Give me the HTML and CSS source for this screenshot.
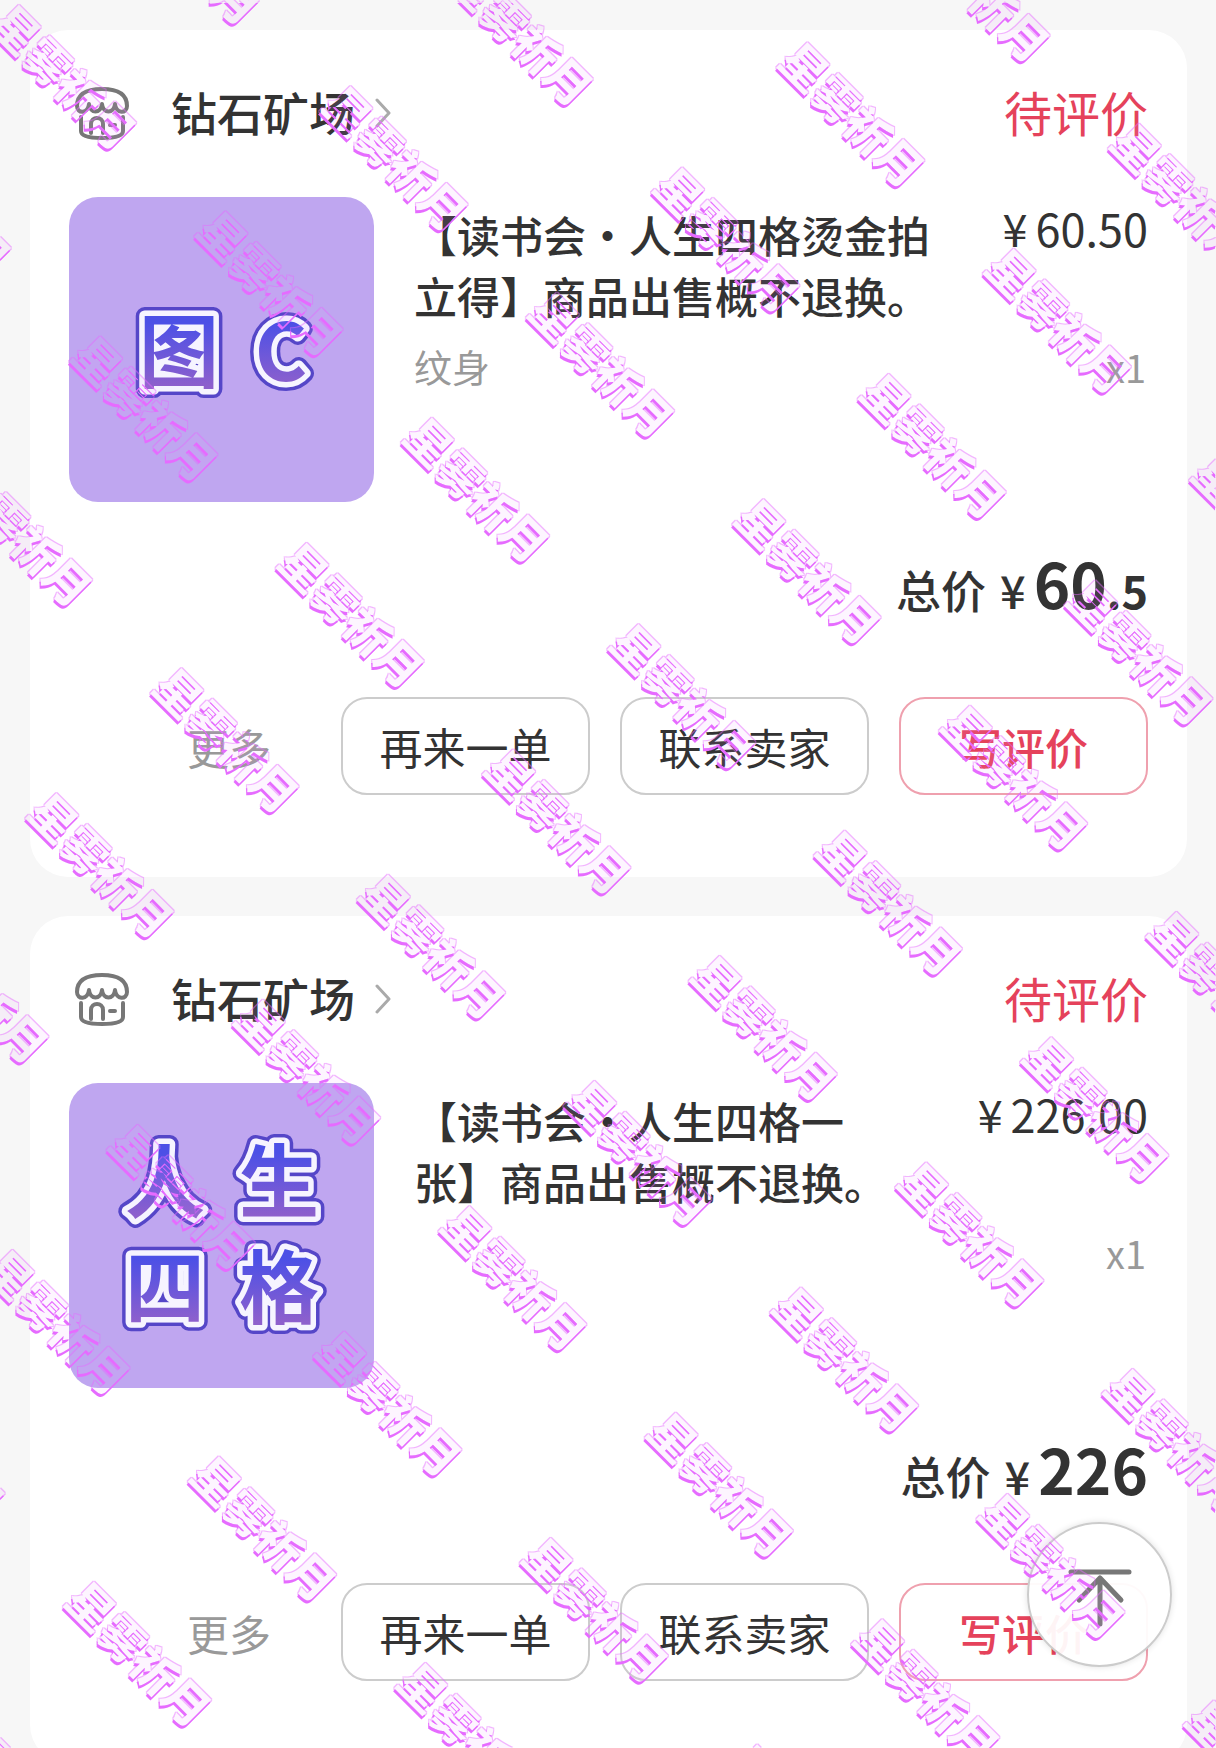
FILE: index.html
```html
<!DOCTYPE html>
<html lang="zh-CN">
<head>
    <meta charset="utf-8">
    <title>我的订单</title>
    <link rel="stylesheet" href="styles.css">
</head>
<body>
    <main class="orders">
        <section class="card">
            <div class="card-head">
                <a class="shop" href="#">
                    <svg class="shop-icon" viewBox="0 0 54 53">
                        <path d="M2 19C2 7 12 2 27 2s25 5 25 17c0 8-11 8-12-2-1 10-12 10-13 0-1 10-12 10-13 0-1 10-12 10-12 2z"/>
                        <path d="M6 30v14c0 5 8 7 21 7s21-2 21-7V30M16 46v-9c0-8 12-8 12 0v9M35 38h5"/>
                    </svg>
                    <span class="shop-name">钻石矿场</span>
                    <svg class="arrow" viewBox="0 0 16 30"><path d="M2 2l12 13L2 28"/></svg>
                </a>
                <span class="status">待评价</span>
            </div>
            <div class="item">
                <svg class="thumb" viewBox="0 0 305 305">
                    <defs>
                        <linearGradient id="wordFill" x1="0" y1="0" x2="0" y2="1">
                            <stop offset="0.3" stop-color="#4c50e6"/>
                            <stop offset="0.85" stop-color="#8e60cc"/>
                        </linearGradient>
                    </defs>
                    <use href="#word1" class="word-outline"/>
                    <g class="word-face">
                        <g id="word1">
                            <text x="110" y="184">图</text>
                            <text x="212" y="184">C</text>
                        </g>
                    </g>
                </svg>
                <div class="info">
                    <div class="title">【读书会·人生四格烫金拍立得】商品出售概不退换。</div>
                    <div class="spec">纹身</div>
                </div>
                <div class="side">
                    <div class="price"><span class="yen">¥</span>60.50</div>
                    <div class="count">x1</div>
                </div>
            </div>
            <div class="total">总价<span class="total-yen">¥</span><b class="big">60</b><b class="small">.5</b></div>
            <div class="actions">
                <button type="button" class="more">更多</button>
                <button type="button" class="btn">再来一单</button>
                <button type="button" class="btn">联系卖家</button>
                <button type="button" class="btn btn-red">写评价</button>
            </div>
        </section>

        <section class="card">
            <div class="card-head">
                <a class="shop" href="#">
                    <svg class="shop-icon" viewBox="0 0 54 53">
                        <path d="M2 19C2 7 12 2 27 2s25 5 25 17c0 8-11 8-12-2-1 10-12 10-13 0-1 10-12 10-13 0-1 10-12 10-12 2z"/>
                        <path d="M6 30v14c0 5 8 7 21 7s21-2 21-7V30M16 46v-9c0-8 12-8 12 0v9M35 38h5"/>
                    </svg>
                    <span class="shop-name">钻石矿场</span>
                    <svg class="arrow" viewBox="0 0 16 30"><path d="M2 2l12 13L2 28"/></svg>
                </a>
                <span class="status">待评价</span>
            </div>
            <div class="item">
                <svg class="thumb" viewBox="0 0 305 305">
                    <use href="#word2" class="word-outline"/>
                    <g class="word-face">
                        <g id="word2">
                            <text x="96" y="128">人</text>
                            <text x="210" y="128">生</text>
                            <text x="96" y="234">四</text>
                            <text x="210" y="234">格</text>
                        </g>
                    </g>
                </svg>
                <div class="info">
                    <div class="title">【读书会·人生四格一张】商品出售概不退换。</div>
                </div>
                <div class="side">
                    <div class="price"><span class="yen">¥</span>226.00</div>
                    <div class="count">x1</div>
                </div>
            </div>
            <div class="total">总价<span class="total-yen">¥</span><b class="big">226</b></div>
            <div class="actions">
                <button type="button" class="more">更多</button>
                <button type="button" class="btn">再来一单</button>
                <button type="button" class="btn">联系卖家</button>
                <button type="button" class="btn btn-red">写评价</button>
            </div>
        </section>
    </main>

    <button type="button" class="to-top" aria-label="回到顶部" onclick="window.scrollTo(0, 0)">
        <svg viewBox="0 0 64 64"><path d="M3 9h58M32 15v46M11 37l21-22 21 22"/></svg>
    </button>

    <!-- edge + outline of the watermark letters -->
    <svg class="filters" width="0" height="0">
        <filter id="markEdge" x="0" y="0" width="100%" height="100%" color-interpolation-filters="sRGB">
            <feMorphology in="SourceAlpha" operator="dilate" radius="1" result="fat"/>
            <feFlood flood-color="#e66bff" flood-opacity="0.5"/>
            <feComposite in2="fat" operator="in"/>
            <feComposite in2="SourceAlpha" operator="out" result="line"/>
            <feOffset in="SourceAlpha" dx="-1" dy="3" result="low"/>
            <feFlood flood-color="#e66bff"/>
            <feComposite in2="low" operator="in"/>
            <feComposite in2="SourceAlpha" operator="out" result="edge"/>
            <feFlood flood-color="#f0a0ff" flood-opacity="0.1"/>
            <feComposite in2="SourceAlpha" operator="in" result="face"/>
            <feMerge>
                <feMergeNode in="face"/>
                <feMergeNode in="line"/>
                <feMergeNode in="edge"/>
            </feMerge>
        </filter>
    </svg>
    <div class="watermark" aria-hidden="true">
        <div class="marks" id="marks"></div>
    </div>

    <script>
        var marks = document.getElementById("marks");
        for (var i = 0; i < 8 * 13; i++) {
            var mark = document.createElement("span");
            mark.textContent = "星雾祈月";
            marks.appendChild(mark);
        }

        // empty the cells that lie outside the window
        var rects = Array.from(marks.children).map(function (el) {
            return el.getBoundingClientRect();
        });
        rects.forEach(function (r, n) {
            if (r.right < 10 || r.bottom < 10 || r.left > window.innerWidth - 10 || r.top > window.innerHeight - 10) {
                marks.children[n].textContent = "";
            }
        });
    </script>
</body>
</html>
```

FILE: styles.css
```css
body {
    margin: 0;
    background-color: #f7f7f7;
    color: #333;
    font-family: "Noto Sans CJK SC", sans-serif;
}

button {
    font-family: inherit;
    cursor: pointer;
}

.orders {
    display: flex;
    flex-direction: column;
    gap: 39px;
    padding: 30px 29px 30px 30px;
}

.card {
    padding: 50px 39px 82px;
    border-radius: 38px;
    background-color: #fff;
}

.card-head {
    display: flex;
    justify-content: space-between;
    align-items: center;
    height: 62px;
    margin-bottom: 55px;
}

.shop {
    display: flex;
    align-items: center;
    color: #333;
    text-decoration: none;
}

.shop-icon {
    width: 54px;
    height: 53px;
    margin: 4px 42px 0 6px;
    fill: none;
    stroke: #777;
    stroke-width: 4;
    stroke-linecap: round;
    stroke-linejoin: round;
}

.shop-name {
    font-size: 46px;
    line-height: 60px;
    font-weight: 500;
}

.arrow {
    width: 16px;
    height: 30px;
    margin: 4px 0 0 20px;
    fill: none;
    stroke: #aaa;
    stroke-width: 3;
    stroke-linecap: round;
    stroke-linejoin: round;
}

.status {
    color: #e5425b;
    font-size: 48px;
    line-height: 60px;
}

.item {
    display: flex;
    height: 305px;
}

.thumb {
    flex: none;
    width: 305px;
    height: 305px;
    margin-right: 40px;
    border-radius: 29px;
    background-color: #bfa6f0;
    font-size: 80px;
    font-weight: 700;
    text-anchor: middle;
}

.word-outline {
    fill: #5546c8;
    stroke: #5546c8;
    stroke-width: 18;
    stroke-linejoin: round;
}

.word-face {
    fill: url(#wordFill);
    stroke: #f6f4ff;
    stroke-width: 11;
    stroke-linejoin: round;
    paint-order: stroke;
}

.info {
    flex: 1;
    margin-right: 60px;
    padding-top: 7px;
}

.title {
    font-size: 43px;
    line-height: 61px;
    font-weight: 500;
    text-spacing-trim: space-all;
}

.spec {
    margin-top: 10px;
    color: #999;
    font-size: 38px;
    line-height: 60px;
}

.side {
    flex: none;
    text-align: right;
}

.price {
    font-size: 45px;
    line-height: 61px;
}

.yen {
    margin-right: 8px;
}

.count {
    margin-top: 78px;
    padding-right: 2px;
    color: #999;
    font-size: 38px;
    line-height: 62px;
}

.total {
    display: flex;
    justify-content: flex-end;
    align-items: baseline;
    height: 90px;
    margin: 35px 0 70px;
    font-size: 45px;
    line-height: 90px;
    font-weight: 500;
}

.total-yen {
    margin: 0 8px 0 14px;
}

.big {
    font-size: 62px;
}

.small {
    font-size: 45px;
}

.actions {
    display: flex;
    justify-content: flex-end;
    align-items: center;
    gap: 30px;
}

.more {
    margin-right: 40px;
    padding: 0;
    border: none;
    background: none;
    color: #999;
    font-size: 42px;
}

.btn {
    box-sizing: border-box;
    width: 249px;
    height: 98px;
    padding: 0;
    border: 2px solid #ccc;
    border-radius: 26px;
    background-color: #fff;
    color: #333;
    font-size: 43px;
}

.btn-red {
    border-color: #efa0ae;
    color: #e5425b;
    font-weight: 500;
}

.to-top {
    position: fixed;
    right: 44px;
    bottom: 81px;
    display: flex;
    justify-content: center;
    align-items: center;
    width: 145px;
    height: 145px;
    padding: 0;
    border: 2px solid #ccc;
    border-radius: 50%;
    background-color: rgba(255, 255, 255, 0.94);
    box-shadow: 0 0 6px rgba(0, 0, 0, 0.12);
}

.to-top svg {
    width: 64px;
    height: 64px;
    fill: none;
    stroke: #777;
    stroke-width: 5;
    stroke-linecap: round;
    stroke-linejoin: round;
}

.filters {
    position: absolute;
}

/* watermark over the whole window */
.watermark {
    position: fixed;
    top: 0;
    left: 0;
    width: 100%;
    height: 100vh;
    overflow: hidden;
    pointer-events: none;
    filter: url(#markEdge);
}

.marks {
    position: absolute;
    top: 0;
    left: 0;
    display: grid;
    grid-template-columns: repeat(8, 292px);
    grid-auto-rows: 177px;
    place-items: center;
    transform-origin: 0 0;
    transform: rotate(45deg) translate(-46px, -966px);
    color: #000;
    font-size: 45px;
    font-weight: 900;
    white-space: nowrap;
}
```
